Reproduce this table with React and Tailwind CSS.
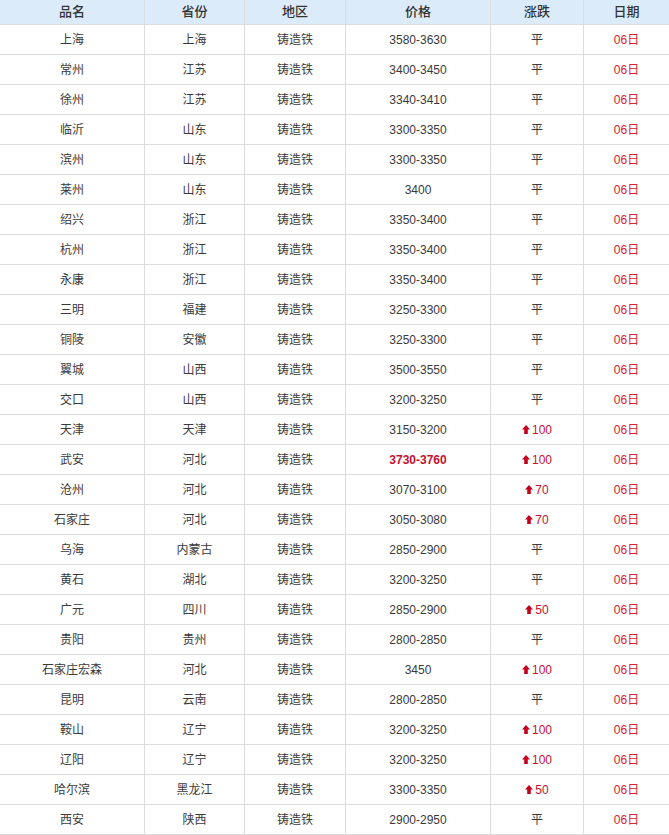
const rows = [
  ['上海', '上海', '3580-3630', ''],
  ['常州', '江苏', '3400-3450', ''],
  ['徐州', '江苏', '3340-3410', ''],
  ['临沂', '山东', '3300-3350', ''],
  ['滨州', '山东', '3300-3350', ''],
  ['莱州', '山东', '3400', ''],
  ['绍兴', '浙江', '3350-3400', ''],
  ['杭州', '浙江', '3350-3400', ''],
  ['永康', '浙江', '3350-3400', ''],
  ['三明', '福建', '3250-3300', ''],
  ['铜陵', '安徽', '3250-3300', ''],
  ['翼城', '山西', '3500-3550', ''],
  ['交口', '山西', '3200-3250', ''],
  ['天津', '天津', '3150-3200', '100'],
  ['武安', '河北', '3730-3760', '100', true],
  ['沧州', '河北', '3070-3100', '70'],
  ['石家庄', '河北', '3050-3080', '70'],
  ['乌海', '内蒙古', '2850-2900', ''],
  ['黄石', '湖北', '3200-3250', ''],
  ['广元', '四川', '2850-2900', '50'],
  ['贵阳', '贵州', '2800-2850', ''],
  ['石家庄宏森', '河北', '3450', '100'],
  ['昆明', '云南', '2800-2850', ''],
  ['鞍山', '辽宁', '3200-3250', '100'],
  ['辽阳', '辽宁', '3200-3250', '100'],
  ['哈尔滨', '黑龙江', '3300-3350', '50'],
  ['西安', '陕西', '2900-2950', ''],
];

const heads = ['品名', '省份', '地区', '价格', '涨跌', '日期'];

// small red up arrow used in the change column
function UpArrow() {
  return (
    <svg width="8" height="9" viewBox="0 0 8 9" className="mr-[2px] mb-[1px] inline-block">
      <path d="M4 0 L8 4.5 L5.8 4.5 L5.8 9 L2.2 9 L2.2 4.5 L0 4.5 Z" fill="#c4001d" />
    </svg>
  );
}

const cell = 'flex items-center justify-center border-b border-r border-[#dcdcdc]';

export default function App() {
  return (
    <div
      className="w-[669px] bg-white text-[12px] text-[#3a3a3a]"
      style={{ fontFamily: '"Liberation Sans", Arial, "Noto Sans CJK SC", sans-serif' }}
    >
      <div className="grid grid-cols-[145px_100px_101px_145px_93px_85px]">
        {heads.map((h, i) => (
          <div
            key={h}
            className={cell + ' h-[25px] bg-[#dbebfa] text-[13px] font-medium text-[#333]' + (i === 5 ? ' border-r-0' : '')}
          >
            {h}
          </div>
        ))}
        {rows.map((r, idx) => (
          <Row key={idx} r={r} />
        ))}
      </div>
    </div>
  );
}

function Row({ r }) {
  const [name, prov, price, up, hot] = r;
  return (
    <>
      <div className={cell + ' h-[30px]'}>{name}</div>
      <div className={cell + ' h-[30px]'}>{prov}</div>
      <div className={cell + ' h-[30px]'}>铸造铁</div>
      <div className={cell + ' h-[30px]' + (hot ? ' font-bold text-[#c8102e]' : '')}>{price}</div>
      <div className={cell + ' h-[30px]'}>
        {up ? (
          <span className="flex items-center text-[#c8102e]">
            <UpArrow />
            {up}
          </span>
        ) : (
          '平'
        )}
      </div>
      <div className={cell + ' h-[30px] border-r-0 text-[#d9202e]'}>06日</div>
    </>
  );
}
